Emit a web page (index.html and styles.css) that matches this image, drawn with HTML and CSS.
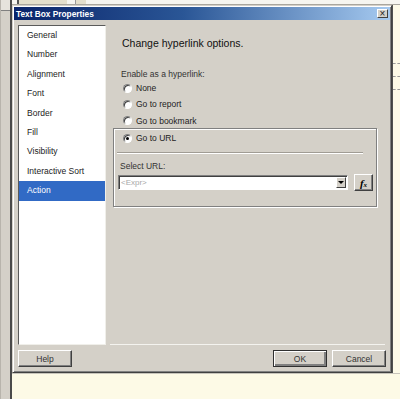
FILE: index.html
```html
<!DOCTYPE html>
<html lang="en">

<head>
    <meta charset="UTF-8">
    <meta name="viewport" content="width=device-width, initial-scale=1.0">
    <title>Text Box Properties</title>

    <link rel="stylesheet" href="styles.css">
</head>

<body>
    <div class="screen">
        <div class="rail">
            <div class="rail-arrow"></div>
        </div>

        <div class="workspace">
            <div class="toolbar">
                <div class="tab"></div>
                <div class="tab short"></div>
            </div>

            <div class="middle">
                <div class="dialog">
                    <div class="titlebar">
                        <span class="title">Text Box Properties</span>
                        <span class="close">&times;</span>
                    </div>

                    <div class="dialog-body">
                        <ul class="pages">
                            <li>General</li>
                            <li>Number</li>
                            <li>Alignment</li>
                            <li>Font</li>
                            <li>Border</li>
                            <li>Fill</li>
                            <li>Visibility</li>
                            <li>Interactive Sort</li>
                            <li class="selected">Action</li>
                        </ul>

                        <div class="panel">
                            <h2>Change hyperlink options.</h2>

                            <div class="label">Enable as a hyperlink:</div>
                            <div class="option"><span class="radio"></span>None</div>
                            <div class="option"><span class="radio"></span>Go to report</div>
                            <div class="option"><span class="radio"></span>Go to bookmark</div>

                            <div class="group">
                                <div class="option"><span class="radio checked"></span>Go to URL</div>
                                <hr>
                                <div class="label">Select URL:</div>
                                <div class="url-row">
                                    <div class="combo">
                                        <span class="expr">&lt;Expr&gt;</span>
                                        <span class="drop"></span>
                                    </div>
                                    <button type="button" class="fx"><i>f</i><small>x</small></button>
                                </div>
                            </div>
                        </div>
                    </div>

                    <div class="footer">
                        <button type="button">Help</button>
                        <div class="spacer"></div>
                        <button type="button" class="default">OK</button>
                        <button type="button">Cancel</button>
                    </div>
                </div>

                <div class="side">
                    <div class="side-line"></div>
                    <div class="side-line"></div>
                    <div class="side-line"></div>
                </div>
            </div>

            <div class="sheet"></div>
        </div>
    </div>
</body>

</html>
```

FILE: styles.css
```css
body {
    margin: 0;
    background-color: #fdfae8;
    font-family: 'Liberation Sans', Arial, sans-serif;
    font-size: 8.5px;
    font-variant-ligatures: none;
    color: #1a1a1a;
}

.screen {
    display: flex;
    width: 400px;
    height: 399px;
    overflow: hidden;
}

/* left edge of the host window */
.rail {
    width: 9px;
    background-color: #d4d0c8;
    border-left: 1px solid #b8b4ac;
    border-right: 2px solid #4a4a4a;
}

.rail-arrow {
    height: 10px;
    border-bottom: 1px solid #808080;
    background-color: #e6e3dc;
}

.workspace {
    flex: 1;
    display: flex;
    flex-direction: column;
}

.toolbar {
    height: 5px;
    display: flex;
    gap: 8px;
    padding-left: 5px;
    background-color: #f6f5f0;
    border-bottom: 1px solid #a9a69e;
    box-sizing: border-box;
}

.tab {
    width: 48px;
    background-color: #e4dfcc;
    border-left: 2px solid #555;
}

.tab.short {
    width: 10px;
    border-left: 1px solid #999;
}

.middle {
    display: flex;
}

/* dialog window */
.dialog {
    width: 380px;
    height: 368px;
    box-sizing: border-box;
    display: flex;
    flex-direction: column;
    padding: 1px;
    background-color: #d4d0c8;
    border: 1px solid;
    border-color: #d4d0c8 #404040 #404040 #d4d0c8;
    box-shadow: inset 1px 1px #fff, inset -1px -1px #808080;
}

.titlebar {
    height: 13px;
    display: flex;
    align-items: center;
    justify-content: space-between;
    padding: 0 2px 0 2px;
    background: linear-gradient(to right, #0a246a, #2a5696 45%, #a6caf0);
}

.title {
    color: #fff;
    font-weight: bold;
    font-size: 8.3px;
}

.close {
    width: 11px;
    height: 9px;
    box-sizing: border-box;
    display: flex;
    align-items: center;
    justify-content: center;
    font-size: 10px;
    line-height: 1;
    color: #222;
    background-color: #d4d0c8;
    border: 1px solid;
    border-color: #fff #404040 #404040 #fff;
}

.dialog-body {
    flex: 1;
    display: flex;
    gap: 4px;
    padding: 5px 5px 0 4px;
}

.pages {
    width: 88px;
    margin: 0;
    padding: 0;
    list-style: none;
    box-sizing: border-box;
    background-color: #fff;
    border: 1px solid;
    border-color: #5a5a5a #f0efea #f0efea #5a5a5a;
}

.pages li {
    height: 19.4px;
    line-height: 19.4px;
    padding-left: 8px;
    color: #222;
}

.pages li.selected {
    background-color: #316ac5;
    color: #fff;
}

.panel {
    flex: 1;
    padding-left: 3px;
    border-bottom: 1px solid #f4f3ef;
}

h2 {
    margin: 11px 0 0 9px;
    font-size: 10.5px;
    font-weight: normal;
    line-height: 14px;
    color: #111;
}

.label {
    height: 12px;
    line-height: 12px;
    padding-left: 8px;
    color: #333;
}

h2 + .label {
    margin-top: 18px;
}

.option {
    display: flex;
    align-items: center;
    height: 16.3px;
    padding-left: 10px;
    color: #222;
}

.radio {
    width: 9px;
    height: 9px;
    box-sizing: border-box;
    margin-right: 4px;
    border-radius: 50%;
    background-color: #fff;
    border: 1px solid;
    border-color: #808080 #fff #fff #808080;
    box-shadow: inset 1px 1px #404040;
    display: flex;
    align-items: center;
    justify-content: center;
}

.radio.checked::after {
    content: "";
    width: 3px;
    height: 3px;
    border-radius: 50%;
    background-color: #000;
}

.group {
    margin: -1px 8px 0 0;
    padding: 1px 3px 15px 3px;
    border: 1px solid #808080;
    box-shadow: 1px 1px #fff, inset 1px 1px #fff;
}

.group .option {
    padding-left: 6px;
}

.group hr {
    margin: 6px 10px 6px 0;
    border: 0;
    border-top: 1px solid #a09c94;
    border-bottom: 1px solid #fff;
}

.group .label {
    padding-left: 3px;
}

.url-row {
    display: flex;
    align-items: center;
    gap: 6px;
    margin-top: 2px;
    padding-left: 1px;
}

.combo {
    width: 230px;
    height: 15px;
    box-sizing: border-box;
    display: flex;
    align-items: center;
    justify-content: space-between;
    padding: 0 1px 0 2px;
    background-color: #fff;
    border: 1px solid;
    border-color: #808080 #fff #fff #808080;
    box-shadow: inset 1px 1px #404040;
}

.expr {
    color: #a8a8a8;
    font-size: 8px;
}

.drop {
    width: 10px;
    height: 11px;
    box-sizing: border-box;
    display: flex;
    align-items: center;
    justify-content: center;
    background-color: #d4d0c8;
    border: 1px solid;
    border-color: #fff #404040 #404040 #fff;
}

.drop::after {
    content: "";
    border-left: 3px solid transparent;
    border-right: 3px solid transparent;
    border-top: 3px solid #000;
}

button {
    height: 17px;
    width: 54px;
    padding: 0;
    font-family: 'Liberation Sans', Arial, sans-serif;
    font-size: 8.5px;
    color: #333;
    background-color: #d4d0c8;
    border: 1px solid;
    border-color: #fff #404040 #404040 #fff;
    box-shadow: inset -1px -1px #808080;
}

button.default {
    border-color: #303030;
    box-shadow: inset 1px 1px #fff, inset -2px -2px #808080;
}

.fx {
    width: 19px;
    font-family: 'Liberation Serif', 'Times New Roman', serif;
    font-weight: bold;
    font-size: 11px;
    color: #000;
}

.fx small {
    font-size: 7px;
    font-style: italic;
}

.footer {
    display: flex;
    gap: 5px;
    padding: 5px 4px 4px 4px;
}

.spacer {
    flex: 1;
}

/* host sheet around the dialog */
.side {
    flex: 1;
    border-left: 1px solid #505050;
    background-color: #fdfae8;
    padding-top: 46px;
}

.side-line {
    height: 12px;
    border-bottom: 1px dashed #9a9a9a;
}

.sheet {
    flex: 1;
    background-color: #fdfae6;
    border-top: 1px solid #c8c5bc;
}
```
